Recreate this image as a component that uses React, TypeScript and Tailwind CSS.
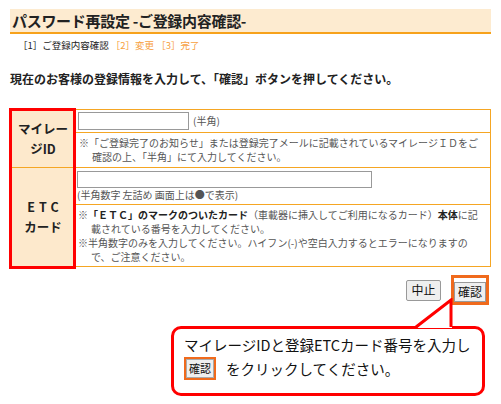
export default function App() {
  return (
    <div className="relative h-[404px] w-[501px] overflow-hidden bg-white font-['Noto_Sans_CJK_JP',sans-serif] text-[#222]">
      <div className="pt-[9px] pl-[10px]">
        <div className="flex h-[25px] w-[481px] items-center border-b-2 border-[#f7a21b] bg-[#fdebd0] pl-[2px]">
          <h1 className="text-[15px] font-bold leading-none tracking-[-0.3px]">パスワード再設定 -ご登録内容確認-</h1>
        </div>
        <div className="mt-[4px] pl-[8px] text-[9.5px] leading-[14px]">
          <span>［1］ご登録内容確認</span>
          <span className="ml-[2px] text-[#f7a040]">［2］変更 ［3］完了</span>
        </div>
        <p className="mt-[19px] text-[12px] font-bold leading-[16px]">現在のお客様の登録情報を入力して、「確認」ボタンを押してください。</p>
      </div>

      <div className="relative mt-[22px] ml-[10px] w-[481px] border border-[#f5a623] text-[10px] leading-[14px] text-[#555]">
        <div className="flex border-b border-[#f5a623]">
          <div className="flex w-[64px] shrink-0 items-center justify-center bg-[#fde9cc] text-center text-[12.5px] font-bold leading-[20px] text-[#222]">
            マイレー
            <br />
            ジID
          </div>
          <div className="flex-1 border-l border-[#f5a623]">
            <div className="flex h-[23px] items-center border-b border-[#f5a623] pl-[2px]">
              <div className="h-[18px] w-[111px] border border-[#999] bg-white" />
              <span className="ml-[4px]">(半角)</span>
            </div>
            <div className="h-[34px] pt-[3px] pl-[3px] whitespace-nowrap">
              <div>※「ご登録完了のお知らせ」または登録完了メールに記載されているマイレージＩＤをご</div>
              <div className="pl-[13px]">確認の上、「半角」にて入力してください。</div>
            </div>
          </div>
        </div>
        <div className="flex">
          <div className="flex w-[64px] shrink-0 items-center justify-center bg-[#fde9cc] text-center text-[12.5px] font-bold leading-[20px] text-[#222]">
            <span>
              <span className="tracking-[4px] pl-[4px]">ETC</span>
              <br />
              カード
            </span>
          </div>
          <div className="flex-1 border-l border-[#f5a623]">
            <div className="h-[37px] border-b border-[#f5a623] pl-[1px] pt-[3px]">
              <div className="h-[17px] w-[295px] border border-[#999] bg-white" />
              <div>(半角数字 左詰め 画面上は●で表示)</div>
            </div>
            <div className="h-[61px] pt-[3px] pl-[2px] whitespace-nowrap">
              <div>
                ※<span className="font-bold text-[#222]">「ＥＴＣ」のマークのついたカード</span>（車載器に挿入してご利用になるカード）<span className="font-bold text-[#222]">本体</span>に記
              </div>
              <div className="pl-[13px]">載されている番号を入力してください。</div>
              <div>※半角数字のみを入力してください。ハイフン(-)や空白入力するとエラーになりますの</div>
              <div className="pl-[13px]">で、ご注意ください。</div>
            </div>
          </div>
        </div>
        <div className="pointer-events-none absolute -top-[2px] -left-[2px] -bottom-[3px] w-[67px] border-[3px] border-[#ff0000]" />
      </div>

      <div className="mt-[8px] mr-[12px] flex items-center justify-end gap-[10px]">
        <button className="h-[21px] w-[35px] rounded-[2px] border border-[#999] bg-[#efefef] text-[12px] leading-none text-[#111]">中止</button>
        <div className="border-[3px] border-[#f06a1c]">
          <button className="h-[20px] w-[32px] border border-[#999] bg-[#efefef] text-[12px] leading-none text-[#111]">確認</button>
        </div>
      </div>

      <div className="absolute left-[171px] top-[326px] h-[70px] w-[314px] whitespace-nowrap rounded-[10px] border-[3px] border-[#ff0000] bg-white pl-[10px] pt-[5px] text-[14.5px] leading-[21px] text-[#111]">
        <div>マイレージIDと登録ETCカード番号を入力し</div>
        <div className="mt-[2px] flex items-center">
          <div className="border-2 border-[#f06a1c]">
            <div className="h-[19px] w-[28px] border border-[#aaa] bg-[#efefef] text-center text-[11px] leading-[17px]">確認</div>
          </div>
          <span className="ml-[10px]">をクリックしてください。</span>
        </div>
      </div>
      <svg className="absolute left-[414px] top-[298px]" width="42" height="34" viewBox="0 0 42 34">
        <polygon points="3,30 37,3 38,30" fill="white" />
        <polyline points="2,29 37,2 37,29" fill="none" stroke="#ff0000" strokeWidth="3" strokeLinejoin="miter" />
      </svg>
    </div>
  );
}
